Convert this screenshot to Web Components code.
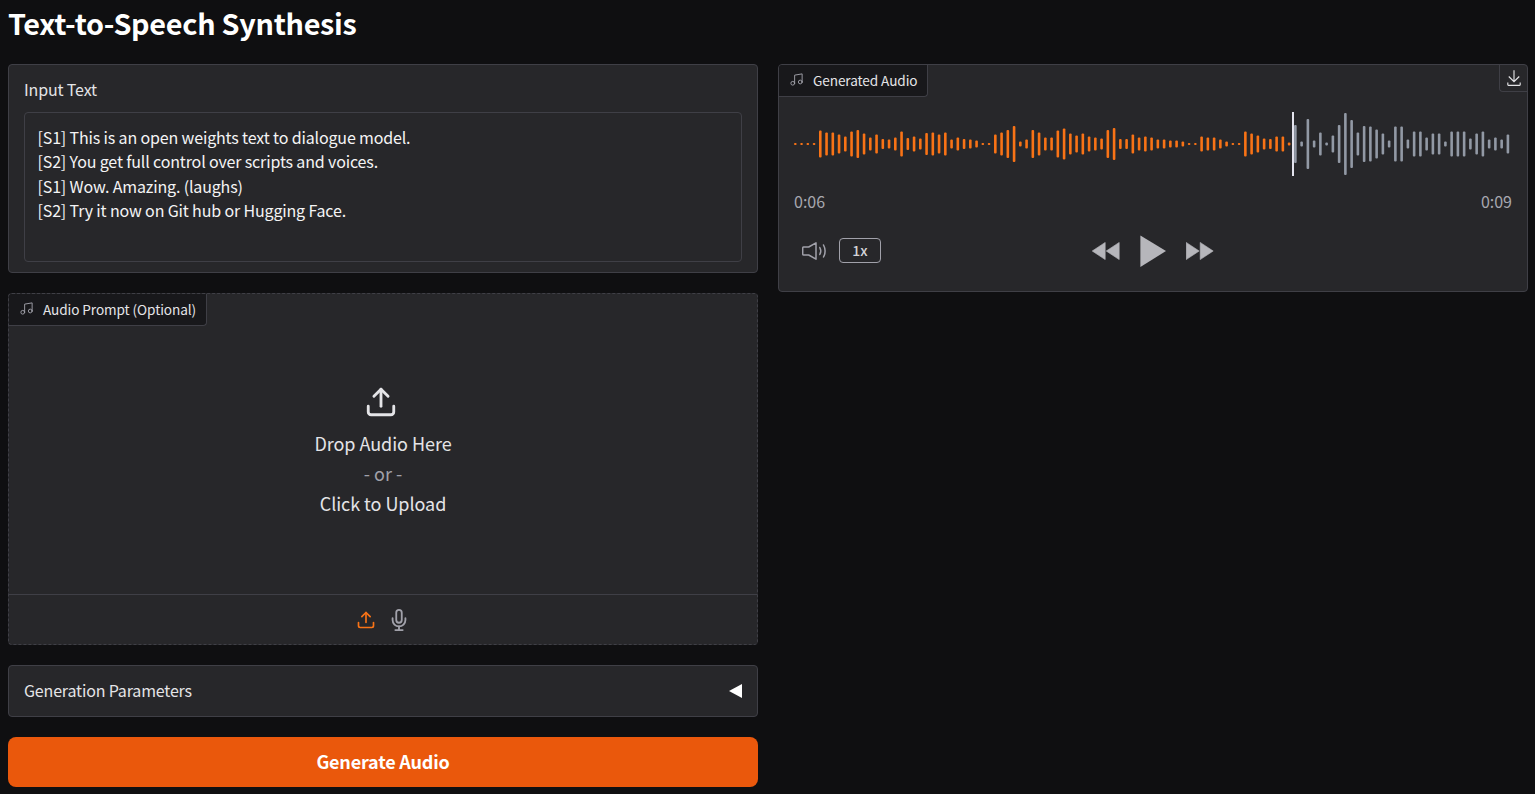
<!DOCTYPE html>
<html>
<head>
<meta charset="utf-8">
<title>Text-to-Speech Synthesis</title>
<style>
  html, body { margin: 0; height: 100%; }
  body {
    background: #0f0f11;
    color: #e4e4e7;
    font-family: "Noto Sans CJK SC", "Source Sans Pro", "Noto Sans", sans-serif;
    overflow: hidden;
  }
</style>
</head>
<body>
<tts-app>
  <page-title slot="title">Text-to-Speech Synthesis</page-title>
  <text-input slot="left" label="Input Text">[S1] This is an open weights text to dialogue model.
[S2] You get full control over scripts and voices.
[S1] Wow. Amazing. (laughs)
[S2] Try it now on Git hub or Hugging Face.</text-input>
  <audio-drop slot="left" label="Audio Prompt (Optional)"></audio-drop>
  <params-accordion slot="left">Generation Parameters</params-accordion>
  <action-button slot="left">Generate Audio</action-button>
  <audio-player slot="right" label="Generated Audio" current="0:06" total="0:09"></audio-player>
</tts-app>

<script>
const ICONS = {
  music: '<svg viewBox="0 0 24 24" fill="none" stroke="currentColor" stroke-width="1.5" stroke-linecap="round" stroke-linejoin="round"><path d="M9 18V5l12-2v13"/><circle cx="6" cy="18" r="3"/><circle cx="18" cy="16" r="3"/></svg>',
  upload: '<svg viewBox="0 0 24 24" fill="none" stroke="currentColor" stroke-width="2" stroke-linecap="round" stroke-linejoin="round"><path d="M21 15v4a2 2 0 0 1-2 2H5a2 2 0 0 1-2-2v-4"/><polyline points="17 8 12 3 7 8"/><line x1="12" y1="3" x2="12" y2="15"/></svg>',
  mic: '<svg viewBox="0 0 24 24" fill="none" stroke="currentColor" stroke-width="2" stroke-linecap="round" stroke-linejoin="round"><path d="M12 1a3 3 0 0 0-3 3v8a3 3 0 0 0 6 0V4a3 3 0 0 0-3-3z"/><path d="M19 10v2a7 7 0 0 1-14 0v-2"/><line x1="12" y1="19" x2="12" y2="23"/><line x1="8" y1="23" x2="16" y2="23"/></svg>',
  download: '<svg viewBox="0 0 32 32" fill="currentColor"><path d="M26 24v4H6v-4H4v4a2 2 0 0 0 2 2h20a2 2 0 0 0 2-2v-4zm0-10l-1.41-1.41L17 20.17V2h-2v18.17l-7.59-7.58L6 14l10 10l10-10z"/></svg>',
  volume: '<svg viewBox="0 0 25 18" fill="none" stroke="currentColor" stroke-width="1.5" stroke-linejoin="round" stroke-linecap="round"><path d="M1.700 5h5L14 .8v16.400L6.700 13h-5q-1 0-1-1V6q0-1 1-1z"/><path d="M17.800 5.500q2 3.500 0 7"/><path d="M21.500 3q3.200 6 0 12"/></svg>',
  rewind: '<svg viewBox="0 0 28 18" fill="currentColor"><path d="M.2 9l13-8.600v17.200zM14.200 9l13-8.600v17.200z" stroke="currentColor" stroke-width=".6" stroke-linejoin="round"/></svg>',
  play: '<svg viewBox="0 0 26 32" fill="currentColor"><path d="M.4.4L26 16 .4 32z"/></svg>',
  forward: '<svg viewBox="0 0 28 18" fill="currentColor"><path d="M27.200 9l-13-8.600v17.200zM13.200 9L.2.4v17.200z" stroke="currentColor" stroke-width=".6" stroke-linejoin="round"/></svg>'
};

// heights read off the reference, one bar per entry, played part first
const PLAYED = [2,2,2,2,27,23,23,19,15,25,28,21,13,19,10,9,13,25,12,15,11,22,23,19,23,9,13,10,9,7,2,2,19,23,28,36,5,9,28,23,13,13,27,31,21,17,21,15,13,11,28,32,10,10,19,13,15,13,9,9,7,7,5,2,2,15,13,13,9,5,2,2,25,21,17,11,10,15,15,3];
const REST = [38,5,50,7,23,3,17,38,62,48,23,36,35,29,21,7,35,35,9,25,25,13,21,21,5,25,25,25,11,21,25,9,13,9,19];

class TtsApp extends HTMLElement {
  constructor() {
    super();
    this.attachShadow({ mode: 'open' }).innerHTML = `
      <style>
        :host { display: block; padding: 0 7px 0 8px; }
        .cols { display: grid; grid-template-columns: 750px 750px; gap: 20px; }
        .col { display: flex; flex-direction: column; gap: 20px; align-items: stretch; }
      </style>
      <slot name="title"></slot>
      <div class="cols">
        <div class="col"><slot name="left"></slot></div>
        <div class="col"><slot name="right"></slot></div>
      </div>`;
  }
}

class PageTitle extends HTMLElement {
  constructor() {
    super();
    this.attachShadow({ mode: 'open' }).innerHTML = `
      <style>
        :host { display: flex; align-items: center; height: 64px; box-sizing: border-box; padding-bottom: 19px;
                font-size: 28.8px; letter-spacing: -.28px; font-weight: 600; line-height: 45px; color: #fff; }
      </style>
      <slot></slot>`;
  }
}

class TextInput extends HTMLElement {
  constructor() {
    super();
    this.attachShadow({ mode: 'open' }).innerHTML = `
      <style>
        :host { display: block; box-sizing: border-box; height: 209px; padding: 14px 15px 11px;
                background: #27272a; border: 1px solid #3f3f46; border-radius: 4px; letter-spacing: -.15px; }
        .label { font-size: 16px; line-height: 20px; height: 33px; color: #e4e4e7; }
        .area { box-sizing: border-box; height: 150px; padding: 12px 13px 12px 12.500px; border: 1px solid #3f3f46; border-radius: 4px;
                font-size: 16px; line-height: 24.4px; color: #f4f4f5; white-space: pre-wrap; }
      </style>
      <div class="label"></div>
      <div class="area"><slot></slot></div>`;
    this.shadowRoot.querySelector('.label').textContent = this.getAttribute('label');
  }
}

class BlockLabel extends HTMLElement {
  constructor() {
    super();
    this.attachShadow({ mode: 'open' }).innerHTML = `
      <style>
        :host { position: absolute; left: 0; top: 0; display: flex; align-items: center; box-sizing: border-box; height: 32px;
                padding: 0 10px 2px 10px; gap: 9px; background: #18181b; color: #e4e4e7;
                border-right: 1px solid #3f3f46; border-bottom: 1px solid #3f3f46; border-radius: 3px 0 4px 0;
                font-size: 13.6px; letter-spacing: -.09px; line-height: 20px; white-space: nowrap; }
        .i { width: 15px; height: 15px; color: #a1a1aa; display: block; }
        .i svg { display: block; width: 100%; height: 100%; }
      </style>
      <span class="i">${ICONS.music}</span><slot></slot>`;
  }
}

class AudioDrop extends HTMLElement {
  constructor() {
    super();
    this.attachShadow({ mode: 'open' }).innerHTML = `
      <style>
        :host { display: flex; flex-direction: column; position: relative; box-sizing: border-box; height: 352px;
                background: #27272a; border: 1px dashed #3f3f46; border-radius: 4px; }
        .drop { flex: 1; display: flex; flex-direction: column; align-items: center; justify-content: center; padding-top: 14px; }
        .up { width: 34px; height: 34px; color: #e4e4e7; margin: 0 4px 9px 0; }
        .up svg, .tool svg { display: block; width: 100%; height: 100%; }
        .big { font-size: 18px; letter-spacing: -.05px; line-height: 30px; color: #e4e4e7; }
        .or { font-size: 18px; line-height: 30px; color: #a1a1aa; }
        .tools { height: 50px; box-sizing: border-box; border-top: 1px solid #3f3f46; display: flex; justify-content: center;
                 align-items: center; gap: 12px; }
        .tool { width: 22px; height: 22px; color: #a1a1aa; }
        .tool.on { width: 20px; height: 20px; color: #f97316; }
      </style>
      <block-label></block-label>
      <div class="drop">
        <div class="up">${ICONS.upload}</div>
        <div class="big">Drop Audio Here</div>
        <div class="or">- or -</div>
        <div class="big">Click to Upload</div>
      </div>
      <div class="tools">
        <span class="tool on">${ICONS.upload}</span>
        <span class="tool">${ICONS.mic}</span>
      </div>`;
    this.shadowRoot.querySelector('block-label').textContent = this.getAttribute('label');
  }
}

class ParamsAccordion extends HTMLElement {
  constructor() {
    super();
    this.attachShadow({ mode: 'open' }).innerHTML = `
      <style>
        :host { display: flex; align-items: center; justify-content: space-between; box-sizing: border-box; height: 52px;
                padding: 0 15px 2px; background: #27272a; border: 1px solid #3f3f46; border-radius: 4px;
                font-size: 16px; letter-spacing: -.17px; color: #e4e4e7; }
        .arrow { width: 0; height: 0; margin-top: 2px; border-top: 7px solid transparent; border-bottom: 7px solid transparent; border-right: 13px solid #fff; }
      </style>
      <span><slot></slot></span>
      <span class="arrow"></span>`;
  }
}

class ActionButton extends HTMLElement {
  constructor() {
    super();
    this.attachShadow({ mode: 'open' }).innerHTML = `
      <style>
        :host { display: flex; align-items: center; justify-content: center; box-sizing: border-box; height: 50px; padding-bottom: 2px;
                background: #ea580c; border-radius: 8px; color: #fff; font-size: 18px; letter-spacing: -.2px; font-weight: 600; }
      </style>
      <slot></slot>`;
  }
}

class WaveForm extends HTMLElement {
  constructor() {
    super();
    this.attachShadow({ mode: 'open' }).innerHTML = `
      <style>
        :host { display: block; position: relative; height: 64px; }
        svg { display: block; width: 100%; height: 100%; }
        .head { position: absolute; left: 498px; top: 0; width: 2px; height: 64px; background: #e4e4ee; }
      </style>
      <svg viewBox="0 0 718 64"></svg>
      <div class="head"></div>`;
    const step = 712.6 / (PLAYED.length + REST.length - 1);
    const rects = [...PLAYED.map(h => [h, '#f97316']), ...REST.map(h => [h, '#9299a5'])]
      .map(([h, c], i) => `<rect x="${(i * step).toFixed(2)}" y="${32 - h / 2}" width="2.6" height="${h}" rx="1" fill="${c}"/>`);
    this.shadowRoot.querySelector('svg').innerHTML = rects.join('');
  }
}

class AudioPlayer extends HTMLElement {
  constructor() {
    super();
    this.attachShadow({ mode: 'open' }).innerHTML = `
      <style>
        :host { display: block; position: relative; box-sizing: border-box; height: 228px; padding: 47px 15px 0;
                background: #27272a; border: 1px solid #3f3f46; border-radius: 4px; }
        .dl { position: absolute; top: 0; right: 0; width: 28px; height: 27px; box-sizing: border-box; display: flex;
              align-items: center; justify-content: center; border-left: 1px solid #3f3f46; border-bottom: 1px solid #3f3f46;
              border-radius: 0 3px 0 4px; color: #e4e4e7; }
        .dl svg { width: 18px; height: 18px; display: block; }
        .times { display: flex; justify-content: space-between; font-size: 16px; line-height: 20px; color: #a8a8b0; margin-top: 15px; }
        .controls { display: grid; grid-template-columns: 1fr auto 1fr; align-items: center; height: 32px; margin-top: 24px; }
        .left { display: flex; align-items: center; gap: 12px; padding-left: 8px; }
        .vol { width: 25px; height: 18px; color: #a1a1aa; }
        .vol svg, .mid svg { display: block; width: 100%; height: 100%; }
        .speed { box-sizing: border-box; width: 42px; height: 25px; margin-bottom: 2px; border: 1px solid #a1a1aa; border-radius: 4px; display: flex;
                 align-items: center; justify-content: center; font-size: 14px; font-weight: 500; color: #d4d4d8; }
        .mid { display: flex; align-items: center; gap: 20px; color: #b6b6bb; }
        .seek { width: 28px; height: 18px; }
        .play { width: 26px; height: 32px; }
      </style>
      <block-label></block-label>
      <div class="dl">${ICONS.download}</div>
      <wave-form></wave-form>
      <div class="times"><span>${this.getAttribute('current')}</span><span>${this.getAttribute('total')}</span></div>
      <div class="controls">
        <div class="left"><span class="vol">${ICONS.volume}</span><span class="speed">1x</span></div>
        <div class="mid"><span class="seek">${ICONS.rewind}</span><span class="play">${ICONS.play}</span><span class="seek">${ICONS.forward}</span></div>
        <div></div>
      </div>`;
    this.shadowRoot.querySelector('block-label').textContent = this.getAttribute('label');
  }
}

customElements.define('block-label', BlockLabel);
customElements.define('wave-form', WaveForm);
customElements.define('page-title', PageTitle);
customElements.define('text-input', TextInput);
customElements.define('audio-drop', AudioDrop);
customElements.define('params-accordion', ParamsAccordion);
customElements.define('action-button', ActionButton);
customElements.define('audio-player', AudioPlayer);
customElements.define('tts-app', TtsApp);
</script>
</body>
</html>
